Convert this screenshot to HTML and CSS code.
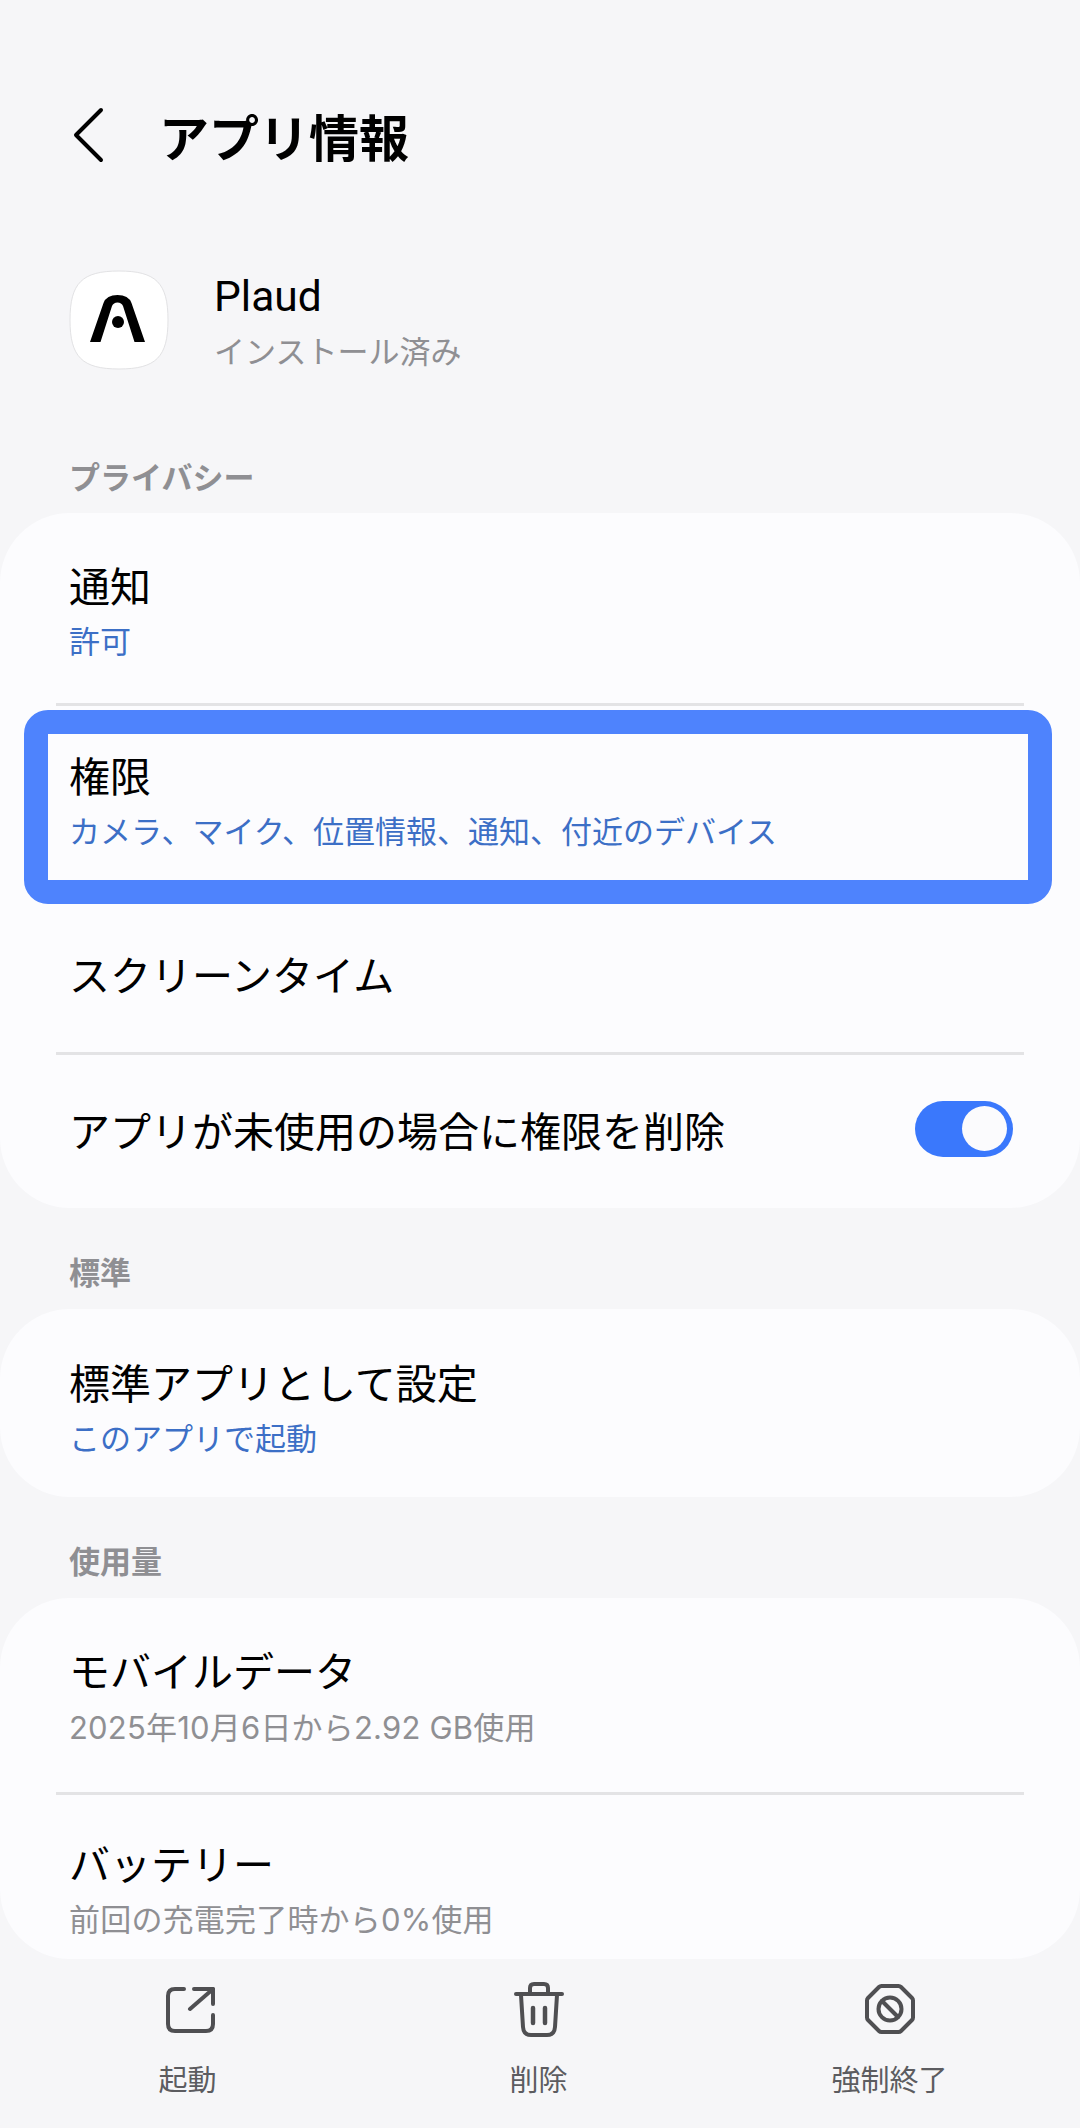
FILE: index.html
```html
<!DOCTYPE html>
<html lang="ja">
<head>
<meta charset="utf-8">
<title>アプリ情報</title>
<link rel="stylesheet" href="styles.css">
</head>
<body>
<div class="screen">
  <header class="topbar">
    <svg class="back" width="36" height="56" viewBox="0 0 36 56"><path d="M30 3 L5 28 L30 53" fill="none" stroke="#000" stroke-width="4" stroke-linecap="round" stroke-linejoin="round"/></svg>
    <h1 class="title">アプリ情報</h1>
  </header>
  <section class="apphead">
    <div class="appicon">
      <svg width="98" height="98" viewBox="0 0 98 98">
        <path d="M0 49 C0 12 12 0 49 0 C86 0 98 12 98 49 C98 86 86 98 49 98 C12 98 0 86 0 49Z" fill="#fff" stroke="#e2e2e4" stroke-width="1"/>
        <path d="M20 71 L33.5 32 Q36.5 24 47.5 24 Q58.5 24 61.5 32 L75 71 H64.5 L53 35 Q51.5 31.5 47.5 31.5 Q43.5 31.5 42 35 L30.5 71 Z" fill="#000"/>
        <circle cx="48" cy="51" r="6" fill="#000"/>
      </svg>
    </div>
    <div class="appmeta">
      <div class="appname">Plaud</div>
      <div class="appstate">インストール済み</div>
    </div>
  </section>
  <div class="scroller">
    <h2 class="sect sect-first">プライバシー</h2>
    <section class="card">
      <div class="row row-two"><div class="r-title">通知</div><div class="r-sub blue">許可</div></div>
      <div class="sep"></div>
      <div class="row row-focus"><div class="r-title">権限</div><div class="r-sub blue">カメラ、マイク、位置情報、通知、付近のデバイス</div></div>
      <div class="row row-one"><div class="r-title">スクリーンタイム</div></div>
      <div class="sep"></div>
      <div class="row row-toggle">
        <div class="r-title">アプリが未使用の場合に権限を削除</div>
        <div class="toggle"><span class="knob"></span></div>
      </div>
    </section>
    <h2 class="sect">標準</h2>
    <section class="card">
      <div class="row row-two row-short"><div class="r-title">標準アプリとして設定</div><div class="r-sub blue">このアプリで起動</div></div>
    </section>
    <h2 class="sect">使用量</h2>
    <section class="card card-last">
      <div class="row row-two row-data"><div class="r-title">モバイルデータ</div><div class="r-sub grey">2025年10月6日から2.92 GB使用</div></div>
      <div class="sep"></div>
      <div class="row row-two row-data row-battery"><div class="r-title">バッテリー</div><div class="r-sub grey">前回の充電完了時から0%使用</div></div>
    </section>
  </div>
  <nav class="bottombar">
    <div class="action">
      <svg width="54" height="60" viewBox="0 0 54 60" fill="none" stroke="#4f4f52" stroke-width="4" stroke-linecap="round" stroke-linejoin="round"><path d="M23 9 H14 Q7 9 7 16 V44 Q7 51 14 51 H45 Q52 51 52 44 V35"/><path d="M33 9 H52 V24"/><path d="M52 9 L29 29"/></svg>
      <span class="a-label">起動</span>
    </div>
    <div class="action">
      <svg width="54" height="60" viewBox="0 0 54 60" fill="none" stroke="#4f4f52" stroke-width="4" stroke-linecap="round" stroke-linejoin="round"><path d="M4 14 H50"/><path d="M18 13 V8 Q18 4 22 4 H32 Q36 4 36 8 V13"/><path d="M9 15 L11 47 Q11.5 55 19 55 H35 Q42.5 55 43 47 L45 15"/><path d="M21 28 V43" stroke-width="4.5"/><path d="M33 28 V43" stroke-width="4.5"/></svg>
      <span class="a-label">削除</span>
    </div>
    <div class="action">
      <svg width="54" height="60" viewBox="0 0 54 60" fill="none" stroke="#4f4f52" stroke-width="4" stroke-linecap="round" stroke-linejoin="round"><path d="M18.5 6 H35.5 Q37 6 38 7 L49 18 Q50 19 50 20.5 V37.5 Q50 39 49 40 L38 51 Q37 52 35.5 52 H18.5 Q17 52 16 51 L5 40 Q4 39 4 37.5 V20.5 Q4 19 5 18 L16 7 Q17 6 18.5 6Z"/><circle cx="27" cy="29" r="11.5"/><path d="M19 21 L35 37"/></svg>
      <span class="a-label">強制終了</span>
    </div>
  </nav>
</div>
</body>
</html>
```
FILE: styles.css
```css
* { box-sizing: border-box; }
html, body { margin: 0; padding: 0; }
body {
  width: 1080px;
  height: 2128px;
  overflow: hidden;
  background: #f6f6f8;
  font-family: "Noto Sans CJK JP", "Noto Sans", sans-serif;
  color: #000;
}
.screen { display: flex; flex-direction: column; height: 2128px; }
.topbar {
  display: flex;
  align-items: center;
  flex: none;
  height: 60px;
  margin-top: 105px;
  padding-left: 71px;
  gap: 52px;
}
.title { margin: 0; font-size: 50px; font-weight: 700; line-height: 60px; }
.back { flex: none; }
.apphead {
  display: flex;
  align-items: flex-start;
  flex: none;
  height: 100px;
  margin-top: 105px;
  padding-left: 70px;
  gap: 46px;
}
.appicon { width: 98px; height: 98px; flex: none; margin-top: 1px; }
.appicon svg { display: block; overflow: visible; }
.appmeta { display: flex; flex-direction: column; }
.appname { font-family: "Roboto", "Noto Sans CJK JP", sans-serif; font-size: 42.5px; line-height: 52px; padding-top: 1px; }
.appstate { font-size: 31px; line-height: 44px; color: #8f8f93; margin-top: 5px; }
.scroller { flex: 1; min-height: 0; overflow: hidden; }
.sect { margin: 0; padding-left: 69px; font-size: 31px; font-weight: 700; line-height: 36px; color: #8f8f93; height: 36px; }
.sect-first { margin-top: 88px; margin-bottom: 19px; }
.card + .sect { margin-top: 45px; margin-bottom: 20px; }
.card { background: #fcfcfe; border-radius: 70px; }
.card-last { height: 361px; overflow: hidden; }
.row { padding-left: 69px; padding-right: 42px; }
.row-two { height: 190px; padding-top: 2px; display: flex; flex-direction: column; justify-content: center; }
.row-short { height: 188px; padding-top: 5px; }
.row-data { height: 194px; padding-top: 0; padding-bottom: 0; }
.row-data .r-sub { margin-top: 9px; }
.row-battery { padding-bottom: 8px; }
.row-battery .r-sub { margin-top: 8px; }
.row-focus {
  margin: 4px 28px 0 24px;
  padding: 0 0 16px 21px;
  height: 194px;
  border: 24px solid #4e83fd;
  border-radius: 24px;
  display: flex;
  flex-direction: column;
  justify-content: center;
}
.row-one { height: 148px; padding-bottom: 11px; display: flex; align-items: center; }
.row-toggle { height: 153px; padding-bottom: 6px; display: flex; align-items: center; justify-content: space-between; padding-right: 67px; }
.r-title { font-size: 41px; line-height: 56px; }
.r-sub { font-size: 31px; line-height: 44px; margin-top: 6px; }
.blue { color: #3c6fc6; }
.grey { font-family: "Inter", "Noto Sans CJK JP", sans-serif; color: #8f8f93; letter-spacing: 0.2px; }
.sep { height: 3px; margin: 0 56px; background: #e3e3e5; }
.toggle { width: 98px; height: 56px; border-radius: 28px; background: #3a78fc; position: relative; flex: none; }
.knob { position: absolute; right: 6px; top: 5.5px; width: 45px; height: 45px; border-radius: 50%; background: #fbfbfd; }
.bottombar { height: 169px; display: flex; flex: none; padding-left: 12px; }
.action { width: 351px; display: flex; flex-direction: column; align-items: center; padding-top: 21px; }
.a-label { font-size: 29px; line-height: 40px; color: #5c5c60; margin-top: 18px; }
```
